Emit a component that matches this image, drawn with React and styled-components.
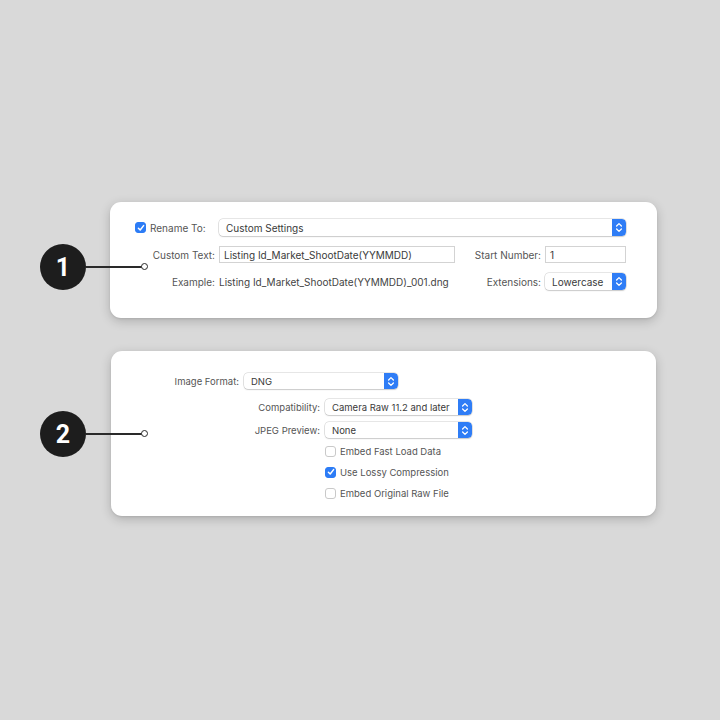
import React from "react";
import styled, { createGlobalStyle } from "styled-components";

const GlobalStyle = createGlobalStyle`
  html, body {
    margin: 0;
    padding: 0;
    background: #d9d9d9;
  }
  body {
    font-family: Inter, "Liberation Sans", sans-serif;
    -webkit-font-smoothing: antialiased;
  }
`;

const Stage = styled.div`
  width: 720px;
  height: 720px;
  box-sizing: border-box;
  padding-top: 202px;
  display: flex;
  flex-direction: column;
  gap: 33px;
  background: #d9d9d9;
`;

const Section = styled.div`
  display: flex;
  align-items: flex-start;
`;

const Badge = styled.div`
  position: relative;
  flex: none;
  width: 46px;
  height: 46px;
  margin: ${(props) => props.$top}px 0 0 40px;
  border-radius: 50%;
  background: #1d1d1d;
  color: #fff;
  font-family: Roboto, "Liberation Sans", sans-serif;
  font-weight: 700;
  font-size: 25px;
  display: flex;
  align-items: center;
  justify-content: center;
  z-index: 2;
`;

const Connector = styled.span`
  position: absolute;
  left: 46px;
  top: 22px;
  width: 56px;
  height: 1.5px;
  background: #2a2a2a;
  &::after {
    content: "";
    position: absolute;
    right: -6px;
    top: -3px;
    width: 5px;
    height: 5px;
    border: 1.3px solid #2a2a2a;
    border-radius: 50%;
    background: #fff;
  }
`;

const Panel = styled.div`
  flex: none;
  width: ${(props) => props.$width}px;
  margin-left: ${(props) => props.$left}px;
  box-sizing: border-box;
  background: #fff;
  border-radius: 11px;
  box-shadow: 0 3px 11px rgba(0, 0, 0, 0.2), 0 1px 2px rgba(0, 0, 0, 0.08);
  color: #4a4a4a;
  font-size: ${(props) => props.$font}px;
`;

const RenameGrid = styled.div`
  display: grid;
  grid-template-columns: 80px 236px 82px 81px;
  grid-auto-rows: 17px;
  column-gap: 4px;
  row-gap: 10px;
  padding: 17px 0 28px 25px;
  align-items: center;
`;

const Label = styled.span`
  text-align: right;
  white-space: nowrap;
  color: #555;
`;

const CheckLabel = styled.label`
  display: flex;
  align-items: center;
  gap: 4px;
  white-space: nowrap;
  color: #555;
`;

const Box = styled.span`
  flex: none;
  width: 11px;
  height: 11px;
  box-sizing: border-box;
  border-radius: 3px;
  border: 1px solid ${(props) => (props.$checked ? "#2c7cf6" : "#c9c9c9")};
  background: ${(props) => (props.$checked ? "#2c7cf6" : "#fff")};
  display: flex;
  align-items: center;
  justify-content: center;
`;

const Field = styled.div`
  height: 17px;
  box-sizing: border-box;
  border: 1px solid #d3d3d3;
  background: #fff;
  padding: 0 4px;
  display: flex;
  align-items: center;
  color: #3a3a3a;
  white-space: nowrap;
`;

const Select = styled.div`
  grid-column: ${(props) => props.$span || "auto"};
  width: ${(props) => (props.$width ? `${props.$width}px` : "auto")};
  height: ${(props) => props.$height || 16}px;
  box-sizing: border-box;
  border-radius: 4px;
  background: #fff;
  box-shadow: 0 0 0 0.5px rgba(0, 0, 0, 0.2), 0 1px 1.5px rgba(0, 0, 0, 0.12);
  display: flex;
  align-items: stretch;
  color: #3a3a3a;
  overflow: hidden;
`;

const SelectText = styled.span`
  flex: 1;
  padding-left: 7px;
  display: flex;
  align-items: center;
  white-space: nowrap;
`;

const Stepper = styled.span`
  flex: none;
  width: 14px;
  background: #2f7df6;
  border-radius: 0 4px 4px 0;
  display: flex;
  align-items: center;
  justify-content: center;
`;

const Plain = styled.span`
  white-space: nowrap;
  color: #444;
`;

const FormatBody = styled.div`
  display: flex;
  flex-direction: column;
  padding: 22px 0 16px;
`;

const FormRow = styled.div`
  display: grid;
  grid-template-columns: ${(props) => props.$label}px auto;
  column-gap: 5px;
  align-items: center;
  margin-top: ${(props) => props.$gap || 0}px;
  height: ${(props) => props.$height || 16}px;
`;

function Check({ checked }) {
  return (
    <Box $checked={checked}>
      {checked && (
        <svg width="8" height="8" viewBox="0 0 8 8">
          <path
            d="M1.4 4.2 L3.2 6 L6.6 1.6"
            fill="none"
            stroke="#fff"
            strokeWidth="1.5"
            strokeLinecap="round"
            strokeLinejoin="round"
          />
        </svg>
      )}
    </Box>
  );
}

function PopUp({ value, width, span, height }) {
  return (
    <Select $width={width} $span={span} $height={height}>
      <SelectText>{value}</SelectText>
      <Stepper>
        <svg width="8" height="11" viewBox="0 0 8 11">
          <path
            d="M1.6 4 L4 1.6 L6.4 4 M1.6 7 L4 9.4 L6.4 7"
            fill="none"
            stroke="#fff"
            strokeWidth="1.3"
            strokeLinecap="round"
            strokeLinejoin="round"
          />
        </svg>
      </Stepper>
    </Select>
  );
}

function Callout({ number, top }) {
  return (
    <Badge $top={top}>
      {number}
      <Connector />
    </Badge>
  );
}

export default function App() {
  return (
    <>
      <GlobalStyle />
      <Stage>
        <Section>
          <Callout number="1" top={42} />
          <Panel $width={547} $left={24} $font={10}>
            <RenameGrid>
              <CheckLabel>
                <Check checked />
                Rename To:
              </CheckLabel>
              <PopUp value="Custom Settings" span="2 / 5" height={17} />

              <Label>Custom Text:</Label>
              <Field>Listing Id_Market_ShootDate(YYMMDD)</Field>
              <Label>Start Number:</Label>
              <Field>1</Field>

              <Label>Example:</Label>
              <Plain>Listing Id_Market_ShootDate(YYMMDD)_001.dng</Plain>
              <Label>Extensions:</Label>
              <PopUp value="Lowercase" height={17} />
            </RenameGrid>
          </Panel>
        </Section>

        <Section>
          <Callout number="2" top={60} />
          <Panel $width={545} $left={25} $font={9.5}>
            <FormatBody>
              <FormRow $label={128}>
                <Label>Image Format:</Label>
                <PopUp value="DNG" width={154} />
              </FormRow>
              <FormRow $label={209} $gap={10}>
                <Label>Compatibility:</Label>
                <PopUp value="Camera Raw 11.2 and later" width={147} />
              </FormRow>
              <FormRow $label={209} $gap={7}>
                <Label>JPEG Preview:</Label>
                <PopUp value="None" width={147} />
              </FormRow>
              <FormRow $label={209} $gap={6} $height={14}>
                <span />
                <CheckLabel>
                  <Check />
                  Embed Fast Load Data
                </CheckLabel>
              </FormRow>
              <FormRow $label={209} $gap={7} $height={14}>
                <span />
                <CheckLabel>
                  <Check checked />
                  Use Lossy Compression
                </CheckLabel>
              </FormRow>
              <FormRow $label={209} $gap={7} $height={14}>
                <span />
                <CheckLabel>
                  <Check />
                  Embed Original Raw File
                </CheckLabel>
              </FormRow>
            </FormatBody>
          </Panel>
        </Section>
      </Stage>
    </>
  );
}
